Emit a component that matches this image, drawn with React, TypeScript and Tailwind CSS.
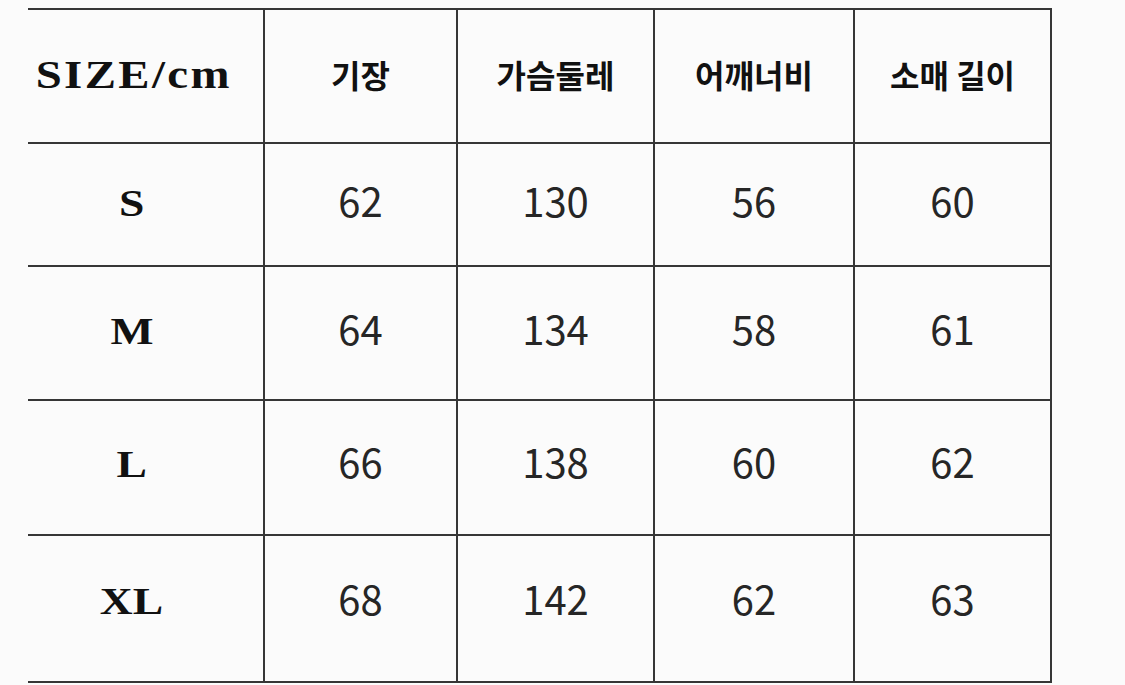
import React from 'react';

const headers = ['기장', '가슴둘레', '어깨너비', '소매 길이'];

const rows = [
  { size: 'S', values: ['62', '130', '56', '60'], h: 'h-[123px]', pad: '' },
  { size: 'M', values: ['64', '134', '58', '61'], h: 'h-[134px]', pad: '' },
  { size: 'L', values: ['66', '138', '60', '62'], h: 'h-[135px]', pad: 'pb-[4px]' },
  { size: 'XL', values: ['68', '142', '62', '63'], h: 'h-[147px]', pad: 'pb-[12px]' },
];

const colWidths = ['w-[193px]', 'w-[197px]', 'w-[200px]', 'w-[197px]'];

const cell = 'flex items-center justify-center border-r-2 border-b-2 border-[#363636]';

export default function App() {
  return (
    <div className="w-[1125px] h-[685px] bg-[#fbfbfb] pl-[28px] pt-[8px]">
      {/* Size chart */}
      <div className="flex flex-col w-[1024px] border-t-2 border-[#363636]">
        {/* Header */}
        <div className="flex h-[134px]">
          <div className={`${cell} w-[237px] pr-[24px] pb-[4px]`}>
            <span className="font-['Liberation_Serif',serif] font-bold text-[39px] text-[#111] tracking-[2px] scale-x-[1.2] inline-block leading-none">
              SIZE/cm
            </span>
          </div>
          {headers.map((label, i) => (
            <div key={label} className={`${cell} ${colWidths[i]} pb-[4px]`}>
              <span className="font-['Noto_Sans_CJK_KR',sans-serif] font-bold text-[32px] text-[#111] leading-none">
                {label}
              </span>
            </div>
          ))}
        </div>

        {rows.map((row) => (
          <div key={row.size} className={`flex ${row.h}`}>
            <div className={`${cell} w-[237px] pr-[28px] ${row.pad}`}>
              <span className="font-['Liberation_Serif',serif] font-bold text-[38px] text-[#111] scale-x-[1.2] inline-block leading-none pb-[4px]">
                {row.size}
              </span>
            </div>
            {row.values.map((v, i) => (
              <div key={i} className={`${cell} ${colWidths[i]} ${row.pad}`}>
                <span className="font-['Noto_Sans_CJK_KR',sans-serif] text-[40px] text-[#262626] leading-none pb-[10px]">
                  {v}
                </span>
              </div>
            ))}
          </div>
        ))}
      </div>
    </div>
  );
}
